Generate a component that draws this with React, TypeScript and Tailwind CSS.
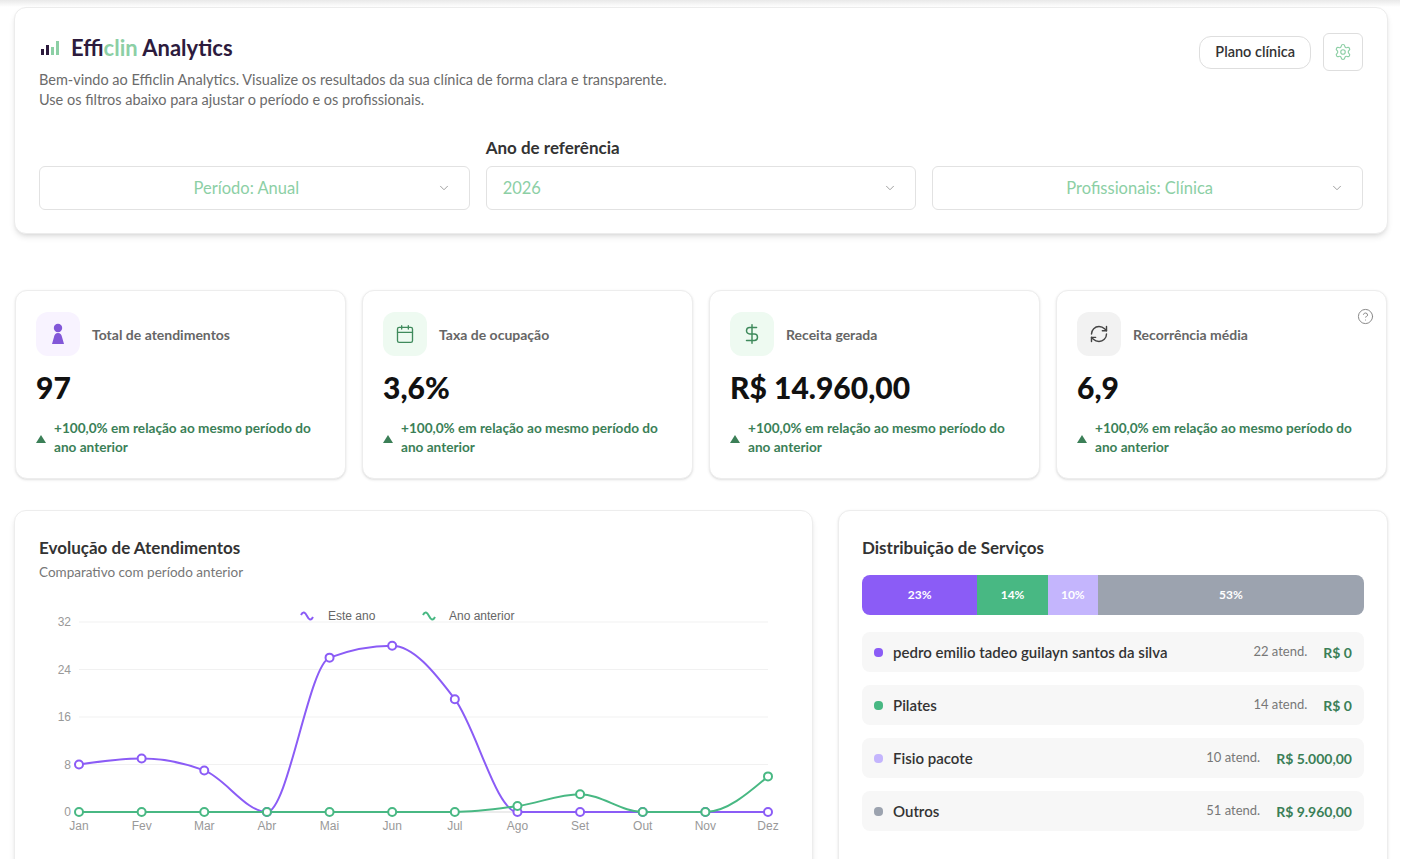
import { Calendar, DollarSign, RefreshCw, CircleHelp, Settings, ChevronDown } from "lucide-react";

const thisYear = [8, 9, 7, 0, 26, 28, 19, 0, 0, 0, 0, 0];
const lastYear = [0, 0, 0, 0, 0, 0, 0, 1, 3, 0, 0, 6];
const months = ["Jan", "Fev", "Mar", "Abr", "Mai", "Jun", "Jul", "Ago", "Set", "Out", "Nov", "Dez"];

const X0 = 40;
const STEP = (729 - 40) / 11;
const yOf = (v: number) => 216 - v * (190 / 32);

type Pt = [number, number];

const sign = (v: number) => (v < 0 ? -1 : v > 0 ? 1 : 0);

// same curve recharts uses (d3 monotoneX)
function monotone(pts: Pt[]) {
  const n = pts.length;
  const t: number[] = new Array(n).fill(0);
  for (let i = 1; i < n - 1; i++) {
    const h0 = pts[i][0] - pts[i - 1][0];
    const h1 = pts[i + 1][0] - pts[i][0];
    const s0 = (pts[i][1] - pts[i - 1][1]) / h0;
    const s1 = (pts[i + 1][1] - pts[i][1]) / h1;
    const p = (s0 * h1 + s1 * h0) / (h0 + h1);
    t[i] = (sign(s0) + sign(s1)) * Math.min(Math.abs(s0), Math.abs(s1), 0.5 * Math.abs(p)) || 0;
  }
  const hA = pts[1][0] - pts[0][0];
  t[0] = (3 * (pts[1][1] - pts[0][1]) / hA - t[1]) / 2;
  const hB = pts[n - 1][0] - pts[n - 2][0];
  t[n - 1] = (3 * (pts[n - 1][1] - pts[n - 2][1]) / hB - t[n - 2]) / 2;
  let d = `M${pts[0][0]},${pts[0][1]}`;
  for (let i = 0; i < n - 1; i++) {
    const dx = (pts[i + 1][0] - pts[i][0]) / 3;
    d += `C${pts[i][0] + dx},${pts[i][1] + dx * t[i]},${pts[i + 1][0] - dx},${pts[i + 1][1] - dx * t[i + 1]},${pts[i + 1][0]},${pts[i + 1][1]}`;
  }
  return d;
}

const toPts = (data: number[]): Pt[] => data.map((v, i) => [X0 + i * STEP, yOf(v)]);

const LineChart = () => {
  const a = toPts(thisYear);
  const b = toPts(lastYear);
  return (
    <svg width="749" height="250" className="block font-['Liberation_Sans',Arial,sans-serif]">
      {[32, 24, 16, 8, 0].map((v) => (
        <g key={v}>
          {v > 0 && <line x1={X0} x2={729} y1={yOf(v)} y2={yOf(v)} stroke="#f1f1f1" />}
          <text x={32} y={yOf(v) + 4} textAnchor="end" fontSize="12" fill="#999">
            {v}
          </text>
        </g>
      ))}
      <line x1={X0} x2={729} y1={216} y2={216} stroke="#d9d9d9" />
      {months.map((m, i) => (
        <text key={m} x={X0 + i * STEP} y={234} textAnchor="middle" fontSize="12" fill="#999">
          {m}
        </text>
      ))}
      <g transform="translate(261,15)">
        <path d="M1 4 C3 0, 5 1, 7 5 S11 10, 13 6" fill="none" stroke="#8b5cf6" strokeWidth="2" />
      </g>
      <text x={289} y={24} fontSize="12" fill="#666">Este ano</text>
      <g transform="translate(383,15)">
        <path d="M1 4 C3 0, 5 1, 7 5 S11 10, 13 6" fill="none" stroke="#48b883" strokeWidth="2" />
      </g>
      <text x={410} y={24} fontSize="12" fill="#666">Ano anterior</text>

      <path d={monotone(a)} fill="none" stroke="#8b5cf6" strokeWidth="2" />
      {a.map(([x, y], i) => (
        <circle key={i} cx={x} cy={y} r="4" fill="#fff" stroke="#8b5cf6" strokeWidth="2" />
      ))}
      <path d={monotone(b)} fill="none" stroke="#48b883" strokeWidth="2" />
      {b.map(([x, y], i) => (
        <circle key={i} cx={x} cy={y} r="4" fill="#fff" stroke="#48b883" strokeWidth="2" />
      ))}
    </svg>
  );
};

const PersonIcon = () => (
  <svg width="18" height="22" viewBox="0 0 18 22" fill="#8257d8">
    <circle cx="9" cy="5" r="4.2" />
    <path d="M9 10c-2.6 0-3.6 1.8-4 4L3 21h12l-2-7c-.4-2.2-1.4-4-4-4z" />
  </svg>
);

const kpis = [
  { title: "Total de atendimentos", value: "97", bg: "bg-[#f8f3ff]", icon: <PersonIcon /> },
  { title: "Taxa de ocupação", value: "3,6%", bg: "bg-[#eefaf1]", icon: <Calendar size={20} strokeWidth={1.6} color="#3f8a5c" /> },
  { title: "Receita gerada", value: "R$ 14.960,00", bg: "bg-[#eefaf1]", icon: <DollarSign size={22} strokeWidth={1.6} color="#3f8a5c" /> },
  { title: "Recorrência média", value: "6,9", bg: "bg-[#f2f2f2]", icon: <RefreshCw size={20} strokeWidth={1.7} color="#444" />, help: true },
];

const services = [
  { name: "pedro emilio tadeo guilayn santos da silva", count: "22 atend.", total: "R$ 0", dot: "bg-[#8b5cf6]" },
  { name: "Pilates", count: "14 atend.", total: "R$ 0", dot: "bg-[#48b883]" },
  { name: "Fisio pacote", count: "10 atend.", total: "R$ 5.000,00", dot: "bg-[#c4b5fd]" },
  { name: "Outros", count: "51 atend.", total: "R$ 9.960,00", dot: "bg-[#9ca3af]" },
];

const Select = ({ label, center }: { label: string; center?: boolean }) => (
  <button className="flex h-[44px] w-full items-center rounded-md border border-[#e2e2e2] bg-white pl-[16px] pr-[18px] text-[16.5px] text-[#8ccfa5]">
    <span className={`flex-1 ${center ? "text-center" : "text-left"}`}>{label}</span>
    <ChevronDown size={14} strokeWidth={1.6} color="#999" />
  </button>
);

export default function App() {
  return (
    <div className="min-h-screen bg-white font-['Lato',sans-serif]">
      <div className="h-[7px] w-[1400px] bg-gradient-to-b from-[#e9e9e9] to-white" />
      <div className="pl-[14px] pr-[19px]">
        {/* header */}
        <div className="rounded-xl border border-[#ececec] bg-white px-[24px] pt-[24px] pb-[23px] shadow-md">
          <div className="flex items-start justify-between">
            <div>
              <div className="flex h-[30px] items-center gap-[10px]">
                <svg width="22" height="18" viewBox="0 0 22 18">
                  <rect x="2" y="11" width="3" height="6" fill="#2d1b3d" />
                  <rect x="7" y="7" width="3" height="10" fill="#2d1b3d" />
                  <rect x="12" y="9" width="3" height="8" fill="#8ccfa5" />
                  <rect x="17" y="3" width="3" height="14" fill="#8ccfa5" />
                </svg>
                <h1 className="text-[22px] font-bold text-[#2d1b3d]">
                  Effi<span className="text-[#8ccfa5]">clin</span> Analytics
                </h1>
              </div>
              <p className="mt-[8px] text-[14.5px] leading-[20px] text-[#6b6b6b]">
                Bem-vindo ao Efficlin Analytics. Visualize os resultados da sua clínica de forma clara e transparente.
                <br />
                Use os filtros abaixo para ajustar o período e os profissionais.
              </p>
            </div>
            <div className="mt-[1px] flex items-center gap-3">
              <button className="h-[33px] rounded-xl border border-[#dedede] px-[15px] text-[14.5px] font-semibold text-[#333]">
                Plano clínica
              </button>
              <button className="flex h-[38px] w-[40px] items-center justify-center rounded-md border border-[#dedede]">
                <Settings size={18} strokeWidth={1.5} color="#8ccfa5" />
              </button>
            </div>
          </div>

          <div className="mt-[27px] grid grid-cols-3 items-end gap-4">
            <Select label="Período: Anual" center />
            <div>
              <div className="mb-[7px] text-[17px] font-bold leading-[22px] text-[#333]">Ano de referência</div>
              <Select label="2026" />
            </div>
            <Select label="Profissionais: Clínica" center />
          </div>
        </div>

        {/* kpis */}
        <div className="mt-[56px] grid grid-cols-4 gap-4 px-px">
          {kpis.map((k) => (
            <div key={k.title} className="relative h-[189px] rounded-xl border border-[#ededed] bg-white px-[20px] pt-[21px] shadow-sm">
              {k.help && <CircleHelp size={17} strokeWidth={1.4} color="#888" className="absolute right-[12px] top-[17px]" />}
              <div className="flex items-center gap-3">
                <div className={`flex h-[44px] w-[44px] items-center justify-center rounded-xl ${k.bg}`}>{k.icon}</div>
                <span className="text-[14px] font-bold text-[#666]">{k.title}</span>
              </div>
              <div className="mt-[14px] text-[30px] font-black leading-[34px] text-[#111]">{k.value}</div>
              <div className="mt-[15px] flex items-center gap-2">
                <svg width="10" height="8" viewBox="0 0 10 8" className="mt-[2px] shrink-0">
                  <path d="M5 0L10 8H0z" fill="#3b7f57" />
                </svg>
                <span className="w-[270px] text-[13.6px] font-bold leading-[19px] text-[#3b7f57]">
                  +100,0% em relação ao mesmo período do ano anterior
                </span>
              </div>
            </div>
          ))}
        </div>

        {/* charts */}
        <div className="mt-[31px] flex gap-[25px]">
          <div className="w-[799px] rounded-xl border border-[#ededed] bg-white px-[24px] pt-[25px] pb-[40px] shadow-md">
            <h2 className="text-[17px] font-bold leading-[24px] text-[#333]">Evolução de Atendimentos</h2>
            <p className="mt-[2px] text-[13.5px] text-[#777]">Comparativo com período anterior</p>
            <div className="mt-[14px]">
              <LineChart />
            </div>
          </div>

          <div className="flex-1 rounded-xl border border-[#ededed] bg-white px-[23px] pt-[25px] pb-[40px] shadow-sm">
            <h2 className="text-[17px] font-bold leading-[24px] text-[#333]">Distribuição de Serviços</h2>
            <div className="mt-[15px] flex h-[40px] overflow-hidden rounded-lg text-[12px] font-bold text-white">
              <div className="flex w-[23%] items-center justify-center bg-[#8b5cf6]">23%</div>
              <div className="flex w-[14%] items-center justify-center bg-[#48b883]">14%</div>
              <div className="flex w-[10%] items-center justify-center bg-[#c4b5fd]">10%</div>
              <div className="flex flex-1 items-center justify-center bg-[#9ca3af]">53%</div>
            </div>
            <div className="mt-[17px] flex flex-col gap-[13px]">
              {services.map((s) => (
                <div key={s.name} className="flex h-[40px] items-center rounded-lg bg-[#f7f7f7] pl-[12px] pr-[12px]">
                  <span className={`h-[9px] w-[9px] rounded-sm ${s.dot}`} />
                  <span className="ml-[10px] flex-1 text-[15px] font-semibold text-[#333]">{s.name}</span>
                  <span className="text-[13px] text-[#777]">{s.count}</span>
                  <span className="ml-[16px] text-[14px] font-bold text-[#3b7f57]">{s.total}</span>
                </div>
              ))}
            </div>
          </div>
        </div>
      </div>
    </div>
  );
}
